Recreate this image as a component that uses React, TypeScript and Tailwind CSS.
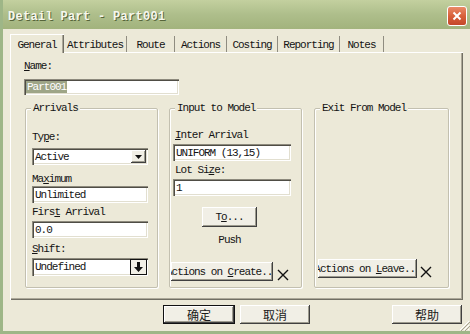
import React from "react";

const txt =
  "font-['Liberation_Mono','Courier_New',monospace] text-[11px] leading-[12px] tracking-[-1px] text-[#141414]";
const cjk = "font-['Noto_Sans_CJK_SC','Noto_Sans',sans-serif] text-[12px] leading-[14px] text-[#1a1a1a]";
const sunken =
  "bg-white shadow-[inset_1px_1px_0_#8d8a7d,inset_2px_2px_0_#4f4d45,inset_-1px_-1px_0_#ffffff,inset_-2px_-2px_0_#e2dfd0]";
const raised =
  "bg-[#F1EFE6] shadow-[inset_-1px_-1px_0_#404040,inset_1px_1px_0_#ffffff,inset_-2px_-2px_0_#9d9b8e]";

const tabs = [
  { label: "Attributes", w: "w-[63px]" },
  { label: "Route", w: "w-[48px]" },
  { label: "Actions", w: "w-[52px]" },
  { label: "Costing", w: "w-[51px]" },
  { label: "Reporting", w: "w-[62px]" },
  { label: "Notes", w: "w-[44px]" },
];

// label text with one underlined mnemonic letter
const Mn = ({ pre, key_, post }: { pre: string; key_: string; post: string }) => (
  <>
    {pre}
    <u className="underline underline-offset-1">{key_}</u>
    {post}
  </>
);

const Label = ({ children, className = "" }: { children: React.ReactNode; className?: string }) => (
  <div className={`${txt} h-[12px] whitespace-nowrap ${className}`}>{children}</div>
);

const Field = ({ value, className = "" }: { value: string; className?: string }) => (
  <div className={`${sunken} ${txt} flex items-center h-[17px] pl-[3px] ${className}`}>{value}</div>
);

const CloseX = () => (
  <svg width="12" height="12" viewBox="0 0 12 12" className="shrink-0">
    <path d="M1 1 L11 11 M11 1 L1 11" stroke="#111" strokeWidth="1.4" fill="none" />
  </svg>
);

const GroupBox = ({
  title,
  className = "",
  children,
}: {
  title: string;
  className?: string;
  children: React.ReactNode;
}) => (
  <fieldset
    className={`h-[186px] border border-[#C3C0B0] rounded-[2px] shadow-[inset_1px_1px_0_#ffffff,1px_1px_0_#ffffff] ${className}`}
  >
    <legend className={`${txt} ml-[5px] px-[2px] h-[12px] bg-[#ECE9D8]`}>{title}</legend>
    {children}
  </fieldset>
);

export default function App() {
  return (
    <div className="relative w-[470px] h-[334px] flex flex-col bg-[#ECE9D8] border-l-[3px] border-b-[3px] border-[#9EB687] overflow-hidden">
      {/* title bar */}
      <div className="h-[29px] shrink-0 flex items-start justify-between pl-[5px] pr-[3px] bg-gradient-to-b from-[#C3D09F] via-[#AEBE8B] to-[#A2B37D]">
        <span className="mt-[10px] font-['Liberation_Mono','Courier_New',monospace] font-bold text-[12px] leading-[14px] tracking-[0.3px] text-[#F6F7EE] [text-shadow:1px_1px_0_#56653a]">
          Detail Part - Part001
        </span>
        <div className="mt-[6px] w-[20px] h-[20px] rounded-[3px] border border-white bg-gradient-to-b from-[#E98A68] via-[#D8603A] to-[#C4472A] flex items-center justify-center">
          <svg width="10" height="10" viewBox="0 0 10 10">
            <path d="M1.5 1.5 L8.5 8.5 M8.5 1.5 L1.5 8.5" stroke="#fff" strokeWidth="2" />
          </svg>
        </div>
      </div>

      {/* tabs */}
      <div className="h-[23px] shrink-0 flex items-end pl-[7px]">
        <div
          className={`${txt} w-[54px] h-[19px] pt-[5px] text-center bg-[#ECE9D8] shadow-[inset_1px_1px_0_#ffffff,inset_-1px_0_0_#716F64,inset_-2px_0_0_#ACA899] relative top-[1px]`}
        >
          General
        </div>
        {tabs.map((t) => (
          <div
            key={t.label}
            className={`${txt} ${t.w} h-[16px] pt-[3px] text-center border-r-[1.5px] border-[#8F8C80]`}
          >
            {t.label}
          </div>
        ))}
      </div>

      {/* tab panel */}
      <div className="ml-[7px] w-[453px] h-[248px] shrink-0 pt-[8px] pl-[14px] shadow-[inset_1px_1px_0_#ffffff,inset_-1px_-1px_0_#716F64,inset_-2px_-2px_0_#ACA899]">
        <Label>
          <Mn pre="" key_="N" post="ame:" />
        </Label>
        <div className={`${sunken} ${txt} mt-[7px] w-[155px] h-[16px] flex items-center pl-[2px]`}>
          <span className="bg-[#9EA587] text-white px-[1px] h-[12px]">Part001</span>
        </div>

        <div className="mt-[7px] flex">
          {/* Arrivals */}
          <GroupBox title="Arrivals" className="ml-[1px] w-[133px]">
            <div className="flex flex-col pl-[6px] pt-[17px]">
              <Label>
                <Mn pre="Ty" key_="p" post="e:" />
              </Label>
              <div className={`${sunken} ${txt} mt-[5px] w-[116px] h-[17px] flex items-center pl-[3px] pr-[2px]`}>
                <span className="flex-1">Active</span>
                <div className={`${raised} w-[15px] h-[13px] flex items-center justify-center`}>
                  <svg width="7" height="4" viewBox="0 0 7 4">
                    <path d="M0 0 H7 L3.5 4 Z" fill="#111" />
                  </svg>
                </div>
              </div>
              <Label className="mt-[8px]">
                <Mn pre="Ma" key_="x" post="imum" />
              </Label>
              <Field value="Unlimited" className="mt-[1px] w-[116px]" />
              <Label className="mt-[3px]">
                <Mn pre="Firs" key_="t" post=" Arrival" />
              </Label>
              <Field value="0.0" className="mt-[3px] w-[116px]" />
              <Label className="mt-[5px]">
                <Mn pre="" key_="S" post="hift:" />
              </Label>
              <div className={`${sunken} ${txt} mt-[3px] w-[116px] h-[18px] flex items-center pl-[3px] pr-[1px]`}>
                <span className="flex-1">Undefined</span>
                <div className="w-[17px] h-[16px] border border-[#111] bg-[#F1EFE6] flex items-center justify-center">
                  <svg width="9" height="10" viewBox="0 0 9 10">
                    <path d="M3 0 H6 V5 H9 L4.5 10 L0 5 H3 Z" fill="#111" />
                  </svg>
                </div>
              </div>
            </div>
          </GroupBox>

          {/* Input to Model */}
          <GroupBox title="Input to Model" className="ml-[11px] w-[133px]">
            <div className="flex flex-col px-[3px] pt-[15px]">
              <Label className="pl-[2px]">
                <Mn pre="" key_="I" post="nter Arrival" />
              </Label>
              <Field value="UNIFORM (13,15)" className="mt-[3px] w-[118px]" />
              <Label className="mt-[3px] pl-[2px]">
                <Mn pre="Lot Si" key_="z" post="e:" />
              </Label>
              <Field value="1" className="mt-[3px] w-[118px]" />
              <div className="ml-[29px] w-[55px] flex flex-col items-center">
                <div className={`${raised} ${txt} mt-[11px] w-[55px] h-[20px] flex items-center justify-center`}>
                  <Mn pre="T" key_="o" post="..." />
                </div>
                <Label className="mt-[7px]">Push</Label>
              </div>
              <div className="mt-[16px] -ml-[2px] flex items-end gap-[4px]">
                <div
                  className={`${raised} ${txt} w-[102px] h-[19px] flex items-center justify-center overflow-hidden whitespace-nowrap`}
                >
                  <span className="shrink-0">
                    <Mn pre="Actions on " key_="C" post="reate..." />
                  </span>
                </div>
                <CloseX />
              </div>
            </div>
          </GroupBox>

          {/* Exit From Model */}
          <GroupBox title="Exit From Model" className="ml-[12px] w-[135px]">
            <div className="h-[172px] flex flex-col justify-end pl-[3px] pb-[8px]">
              <div className="flex items-end gap-[3px]">
                <div
                  className={`${raised} ${txt} w-[99px] h-[19px] flex items-center justify-center overflow-hidden whitespace-nowrap`}
                >
                  <span className="shrink-0">
                    <Mn pre="Actions on " key_="L" post="eave..." />
                  </span>
                </div>
                <CloseX />
              </div>
            </div>
          </GroupBox>
        </div>
      </div>

      {/* dialog buttons */}
      <div className="mt-[5px] flex h-[19px]">
        <div
          className={`${cjk} ml-[160px] w-[72px] h-[19px] flex items-center justify-center bg-[#F1EFE6] shadow-[inset_0_0_0_1px_#111,inset_-2px_-2px_0_#404040,inset_2px_2px_0_#ffffff,inset_-3px_-3px_0_#9d9b8e]`}
        >
          确定
        </div>
        <div className={`${raised} ${cjk} ml-[5px] w-[70px] h-[19px] flex items-center justify-center`}>取消</div>
        <div className={`${raised} ${cjk} ml-[82px] w-[70px] h-[19px] flex items-center justify-center`}>帮助</div>
      </div>

      {/* size grip */}
      <svg className="absolute right-0 bottom-0" width="12" height="12" viewBox="0 0 12 12">
        <path d="M11 2 L2 11 M11 6 L6 11 M11 10 L10 11" stroke="#fff" strokeWidth="1" />
        <path d="M12 3 L3 12 M12 7 L7 12" stroke="#A6A392" strokeWidth="1" />
      </svg>
    </div>
  );
}
